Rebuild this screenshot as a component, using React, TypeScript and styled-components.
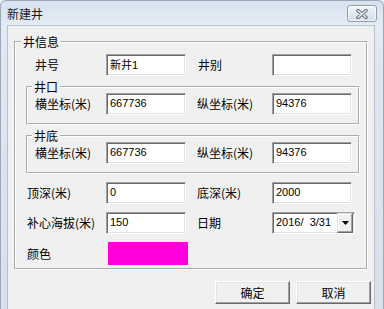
import React from 'react';
import styled, { createGlobalStyle } from 'styled-components';

const GlobalStyle = createGlobalStyle`
  html, body {
    margin: 0;
    padding: 0;
    background: #f0f0f0;
  }
  body {
    font-family: "Noto Sans CJK SC", "Liberation Sans", sans-serif;
  }
`;

const Window = styled.div`
  width: 384px;
  height: 309px;
  box-sizing: border-box;
  border: 1px solid #9aa8b9;
  border-bottom: none;
  border-radius: 6px 6px 0 0;
  background: linear-gradient(180deg, #d8e3f0 0px, #e4ebf4 24px, #dfe6ee 60px, #d9e0e9 100%);
  padding: 0 8px 0 6px;
  display: flex;
  flex-direction: column;
  overflow: hidden;
`;

const TitleBar = styled.div`
  height: 24px;
  display: flex;
  align-items: flex-start;
  justify-content: space-between;
`;

const Title = styled.span`
  margin-top: 6px;
  font-size: 12px;
  line-height: 14px;
  color: #1a1a1a;
`;

const CloseButton = styled.div`
  margin: 4px -2px 0 0;
  width: 30px;
  height: 17px;
  box-sizing: border-box;
  border: 1px solid #8d9cae;
  border-radius: 3px;
  background: linear-gradient(180deg, #f2f6fa 0%, #e1e8f1 50%, #d6dfea 100%);
  box-shadow: inset 0 0 0 1px rgba(255, 255, 255, 0.7);
  display: flex;
  align-items: center;
  justify-content: center;
`;

const Client = styled.div`
  flex: 1;
  background: #f0f0f0;
  border: 1px solid #b6c2d0;
  border-bottom: none;
  display: flex;
  flex-direction: column;
`;

const GroupBox = styled.fieldset<{ $inner?: boolean; $mt?: number }>`
  margin: ${(p) => (p.$inner ? `${p.$mt ?? 0}px 0 0` : '9px 6px 0')};
  padding: 0;
  min-width: 0;
  border: 2px groove #ffffff;
`;

const Legend = styled.legend<{ $inner?: boolean }>`
  margin-left: ${(p) => (p.$inner ? 4 : 5)}px;
  padding: 0 2px;
  font-size: 12px;
  line-height: 14px;
  color: #000;
`;

const GroupBody = styled.div<{ $inner?: boolean }>`
  display: flex;
  flex-direction: column;
  padding: ${(p) => (p.$inner ? '0 0 8px 0' : '0 6px 4px 10px')};
`;

const Row = styled.div<{ $lead: number; $mt: number }>`
  display: grid;
  grid-template-columns: ${(p) => p.$lead}px 80px 86px 80px;
  align-items: center;
  height: 22px;
  margin-top: ${(p) => p.$mt}px;
`;

const Label = styled.span<{ $pad: number }>`
  padding-left: ${(p) => p.$pad}px;
  font-size: 12px;
  line-height: 14px;
  color: #000;
  white-space: nowrap;
`;

const Edit = styled.input`
  box-sizing: border-box;
  width: 80px;
  height: 22px;
  margin: 0;
  padding: 0 2px 2px 3px;
  background: #fff;
  border: 1px solid;
  border-color: #a0a0a0 #ffffff #ffffff #a0a0a0;
  box-shadow: inset 1px 1px 0 #696969, inset -1px -1px 0 #e3e3e3;
  font: 11px "Liberation Sans", "Noto Sans CJK SC", sans-serif;
  color: #000;
  outline: none;
`;

const DateBox = styled.div`
  box-sizing: border-box;
  width: 83px;
  height: 22px;
  background: #fff;
  border: 1px solid;
  border-color: #a0a0a0 #ffffff #ffffff #a0a0a0;
  box-shadow: inset 1px 1px 0 #696969, inset -1px -1px 0 #e3e3e3;
  display: flex;
  align-items: stretch;
  justify-content: space-between;
  padding: 0 1px 0 3px;
`;

const DateText = styled.span`
  font: 11px "Liberation Sans", sans-serif;
  line-height: 18px;
  white-space: pre;
  color: #000;
`;

const DropButton = styled.div`
  box-sizing: border-box;
  width: 16px;
  height: 20px;
  background: #f0f0f0;
  border: 1px solid;
  border-color: #e3e3e3 #696969 #696969 #e3e3e3;
  box-shadow: inset -1px -1px 0 #a0a0a0, inset 1px 1px 0 #ffffff;
  display: flex;
  align-items: center;
  justify-content: center;
`;

const Swatch = styled.div<{ $color: string }>`
  width: 80px;
  height: 23px;
  margin-left: 2px;
  background: ${(p) => p.$color};
`;

const ButtonRow = styled.div`
  display: flex;
  justify-content: flex-end;
  gap: 6px;
  padding: 11px 3px 0 0;
`;

const PushButton = styled.button`
  box-sizing: border-box;
  width: 75px;
  height: 23px;
  margin: 0;
  padding: 0;
  background: #f0f0f0;
  border: 1px solid;
  border-color: #ffffff #696969 #696969 #ffffff;
  box-shadow: inset -1px -1px 0 #a0a0a0, inset 1px 1px 0 #e3e3e3;
  font: 12px "Noto Sans CJK SC", sans-serif;
  color: #000;
`;

const CloseGlyph = () => (
  <svg width="12" height="10" viewBox="0 0 12 10">
    <path d="M2 1.5 L10 8.5 M10 1.5 L2 8.5" stroke="#5e6875" strokeWidth="3.4" strokeLinecap="round" />
    <path d="M2 1.5 L10 8.5 M10 1.5 L2 8.5" stroke="#f4f6f9" strokeWidth="1.4" strokeLinecap="round" />
  </svg>
);

const DownArrow = () => (
  <svg width="7" height="4" viewBox="0 0 7 4">
    <polygon points="0,0 7,0 3.5,4" fill="#000" />
  </svg>
);

export default function App() {
  return (
    <>
      <GlobalStyle />
      <Window>
        <TitleBar>
          <Title>新建井</Title>
          <CloseButton>
            <CloseGlyph />
          </CloseButton>
        </TitleBar>
        <Client>
          <GroupBox>
            <Legend>井信息</Legend>
            <GroupBody>
              <Row $lead={80} $mt={5}>
                <Label $pad={9}>井号</Label>
                <Edit readOnly defaultValue="新井1" />
                <Label $pad={12}>井别</Label>
                <Edit readOnly defaultValue="" />
              </Row>

              <GroupBox $inner $mt={4}>
                <Legend $inner>井口</Legend>
                <GroupBody $inner>
                  <Row $lead={78} $mt={-1}>
                    <Label $pad={7}>横坐标(米)</Label>
                    <Edit readOnly defaultValue="667736" />
                    <Label $pad={11}>纵坐标(米)</Label>
                    <Edit readOnly defaultValue="94376" />
                  </Row>
                </GroupBody>
              </GroupBox>

              <GroupBox $inner $mt={4}>
                <Legend $inner>井底</Legend>
                <GroupBody $inner>
                  <Row $lead={78} $mt={-1}>
                    <Label $pad={7}>横坐标(米)</Label>
                    <Edit readOnly defaultValue="667736" />
                    <Label $pad={11}>纵坐标(米)</Label>
                    <Edit readOnly defaultValue="94376" />
                  </Row>
                </GroupBody>
              </GroupBox>

              <Row $lead={80} $mt={8}>
                <Label $pad={1}>顶深(米)</Label>
                <Edit readOnly defaultValue="0" />
                <Label $pad={11}>底深(米)</Label>
                <Edit readOnly defaultValue="2000" />
              </Row>
              <Row $lead={80} $mt={8}>
                <Label $pad={1}>补心海拔(米)</Label>
                <Edit readOnly defaultValue="150" />
                <Label $pad={11}>日期</Label>
                <DateBox>
                  <DateText>2016/  3/31</DateText>
                  <DropButton>
                    <DownArrow />
                  </DropButton>
                </DateBox>
              </Row>
              <Row $lead={80} $mt={8}>
                <Label $pad={1}>颜色</Label>
                <Swatch $color="#ff00dc" />
              </Row>
            </GroupBody>
          </GroupBox>
          <ButtonRow>
            <PushButton>确定</PushButton>
            <PushButton>取消</PushButton>
          </ButtonRow>
        </Client>
      </Window>
    </>
  );
}
